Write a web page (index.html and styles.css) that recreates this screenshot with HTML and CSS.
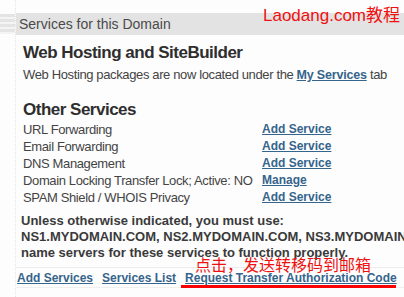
FILE: index.html
```html
<!DOCTYPE html>
<html>
<head>
<meta charset="utf-8">
<link rel="stylesheet" href="styles.css">
</head>
<body>
<div class="page">
  <div class="leftnav"></div>
  <div class="panel">
    <div class="head">Services for this Domain</div>
    <div class="body">
      <h2 class="title first">Web Hosting and SiteBuilder</h2>
      <p class="desc">Web Hosting packages are now located under the <a class="link" href="#">My Services</a> tab</p>
      <h2 class="title second">Other Services</h2>
      <div class="rows">
        <div class="row"><span class="label">URL Forwarding</span><a class="link" href="#">Add Service</a></div>
        <div class="row"><span class="label">Email Forwarding</span><a class="link" href="#">Add Service</a></div>
        <div class="row"><span class="label">DNS Management</span><a class="link" href="#">Add Service</a></div>
        <div class="row"><span class="label">Domain Locking Transfer Lock; Active: NO</span><a class="link" href="#">Manage</a></div>
        <div class="row"><span class="label">SPAM Shield / WHOIS Privacy</span><a class="link" href="#">Add Service</a></div>
      </div>
    </div>
    <div class="notice">Unless otherwise indicated, you must use:<br>NS1.MYDOMAIN.COM, NS2.MYDOMAIN.COM, NS3.MYDOMAIN.COM<br>name servers for these services to function properly.</div>
    <div class="foot">
      <a class="link" href="#">Add Services</a>
      <a class="link" href="#">Services List</a>
      <a class="link" href="#">Request Transfer Authorization Code</a>
      <span class="sep">|</span>
    </div>
  </div>
  <div class="brand">Laodang.com教程</div>
  <div class="note">点击，发送转移码到邮箱</div>
  <div class="redline"></div>
</div>
</body>
</html>
```

FILE: styles.css
```css
html, body {
  margin: 0;
  padding: 0;
  background: #fdfdfd;
}
.page {
  position: relative;
  width: 404px;
  height: 297px;
  overflow: hidden;
  font-family: "Liberation Sans", Arial, sans-serif;
  color: #3a3a3a;
  display: flex;
}
.leftnav {
  width: 15px;
  height: 20px;
  margin-top: 14px;
  flex: none;
  background: repeating-linear-gradient(180deg, #e4e4e4 0, #e4e4e4 3px, #f4f4f4 3px, #f4f4f4 5px);
}
.panel {
  flex: 1;
  min-width: 0;
  padding-top: 13px;
  border-left: 1px dotted #e4e4e4;
}
.head {
  height: 22px;
  line-height: 23px;
  background: #e3e3e3;
  font-size: 14px;
  color: #4a4a4a;
  padding-left: 3px;
  white-space: nowrap;
}
.body {
  padding-left: 7px;
}
.title {
  margin: 0;
  font-size: 17px;
  font-weight: bold;
  letter-spacing: -0.5px;
  color: #2e2e2e;
  line-height: 20px;
  white-space: nowrap;
}
.title.first { margin-top: 8px; }
.title.second { margin-top: 17px; }
.desc {
  margin: 4px 0 0;
  font-size: 13px;
  letter-spacing: -0.37px;
  line-height: 16px;
  color: #444;
  white-space: nowrap;
}
.link {
  color: #35648c;
  font-weight: bold;
  font-size: 12px;
  letter-spacing: 0;
  text-decoration: underline;
}
.desc .link { font-size: 12.5px; letter-spacing: -0.2px; }
.rows {
  margin-top: 1px;
}
.row {
  display: flex;
  height: 17px;
  line-height: 17px;
  font-size: 13px;
  white-space: nowrap;
}
.label {
  width: 239px;
  color: #444;
  letter-spacing: -0.37px;
}
.notice {
  margin-top: 7px;
  padding-left: 5px;
  font-size: 13px;
  font-weight: bold;
  line-height: 16px;
  color: #3a3a3a;
  white-space: nowrap;
}
.foot {
  margin-top: 6px;
  border-top: 1px solid #ececec;
  border-bottom: 1px solid #efefef;
  padding: 3px 0 2px 1px;
  display: flex;
  gap: 9px;
  white-space: nowrap;
  line-height: 14px;
}
.sep {
  font-size: 12px;
  color: #555;
  margin-left: 1px;
}
.brand {
  position: absolute;
  left: 263px;
  top: 1px;
  font-size: 17px;
  color: #f01010;
  font-family: "Liberation Sans", "Noto Sans CJK SC", sans-serif;
  white-space: nowrap;
}
.note {
  position: absolute;
  left: 195px;
  top: 254px;
  font-size: 16px;
  color: #f01010;
  font-family: "Noto Sans CJK SC", sans-serif;
  white-space: nowrap;
  line-height: 20px;
}
.redline {
  position: absolute;
  left: 181px;
  top: 285px;
  width: 215px;
  height: 3px;
  background: #f00;
}
```
